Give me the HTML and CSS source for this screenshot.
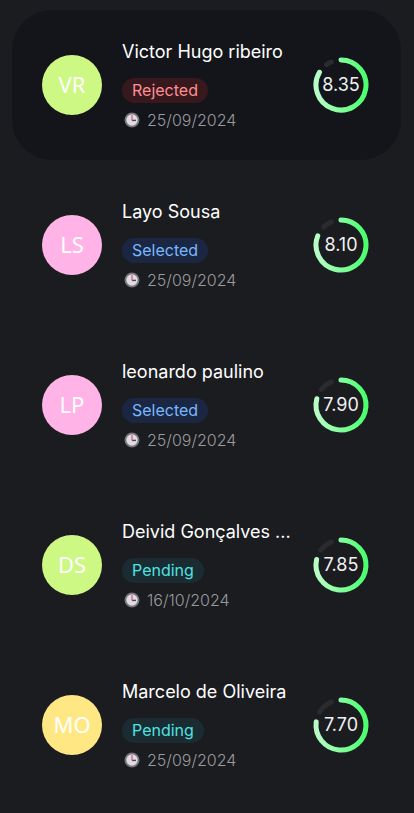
FILE: index.html
```
<!DOCTYPE html>
<html lang="en">
<head>
<meta charset="utf-8">
<meta name="viewport" content="width=device-width, initial-scale=1">
<title>Candidates</title>
<link rel="stylesheet" href="styles.css">
</head>
<body>
<svg class="defs" aria-hidden="true">
  <defs>
    <linearGradient id="ring" x1="0" y1="0" x2="1" y2="0">
      <stop offset="0" stop-color="#b9fcc8"/>
      <stop offset="1" stop-color="#4bff6e"/>
    </linearGradient>
    <symbol id="clock" viewBox="0 0 16 16">
      <circle cx="8" cy="8" r="6.6" fill="#dedbe2" stroke="#77747c" stroke-width="1.8"/>
      <path d="M8 8.4h4" stroke="#4c4656" stroke-width="1.4"/>
      <path d="M8 3v5.4" stroke="#dc5473" stroke-width="1.2"/>
    </symbol>
  </defs>
</svg>
<ul class="list" id="list"></ul>
<script src="app.js"></script>
</body>
</html>
```
FILE: styles.css
```
* { box-sizing: border-box; }

body {
  margin: 0;
  background: #1b1c20;
  color: #fff;
  font-family: Inter, "Noto Sans", sans-serif;
}

.defs { position: absolute; width: 0; height: 0; }

.list {
  display: flex;
  flex-direction: column;
  gap: 10px;
  margin: 0;
  padding: 10px 13px 0 12px;
  list-style: none;
  height: 100vh;
  overflow: hidden;
}

.card {
  display: flex;
  flex: none;
  align-items: center;
  gap: 20px;
  min-height: 150px;
  padding: 26px 30px;
  border-radius: 40px;
}

.card.active { background: #14151a; }

.avatar {
  display: grid;
  place-items: center;
  flex: none;
  width: 60px;
  height: 60px;
  padding-bottom: 2px;
  border-radius: 50%;
  font-family: "Noto Sans", sans-serif;
  font-size: 22px;
}

.lime { background: #cdf884; }
.pink { background: #ffb3e6; }
.yellow { background: #ffe883; }

.info {
  flex: 1;
  min-width: 0;
  padding-top: 2px;
}

.name {
  margin: 0 0 14px;
  font-size: 18px;
  font-weight: 400;
  line-height: 24px;
  white-space: nowrap;
}

.badge {
  display: block;
  width: fit-content;
  padding: 0 10px;
  border-radius: 13px;
  font-size: 16px;
  line-height: 25px;
}

.rejected { background: #37191d; color: #ff8f92; }
.selected { background: #1b2742; color: #78b8ff; }
.pending { background: #1a2b32; color: #4fe3e3; }

.date {
  display: flex;
  align-items: center;
  gap: 7px;
  margin-top: 4px;
  padding-left: 2px;
  color: #999a9d;
  font-size: 16px;
  font-weight: 300;
  line-height: 26px;
}

.clock { width: 16px; height: 16px; }

.score {
  display: grid;
  flex: none;
  width: 60px;
  height: 60px;
  place-items: center;
}

.score > * { grid-area: 1 / 1; }

.ring {
  width: 60px;
  height: 60px;
  fill: none;
  stroke-width: 5;
  stroke-linecap: round;
}

.track { stroke: #292b31; }
.bar { stroke: url(#ring); }

.value {
  color: #f1f1f1;
  font-size: 18px;
  line-height: 24px;
}
```
FILE: app.js
```
const candidates = [
  { initials: "VR", tone: "lime", name: "Victor Hugo ribeiro", status: "Rejected", date: "25/09/2024", score: 8.35, active: true },
  { initials: "LS", tone: "pink", name: "Layo Sousa", status: "Selected", date: "25/09/2024", score: 8.1 },
  { initials: "LP", tone: "pink", name: "leonardo paulino", status: "Selected", date: "25/09/2024", score: 7.9 },
  { initials: "DS", tone: "lime", name: "Deivid Gonçalves ...", status: "Pending", date: "16/10/2024", score: 7.85 },
  { initials: "MO", tone: "yellow", name: "Marcelo de Oliveira", status: "Pending", date: "25/09/2024", score: 7.7 }
];

// Arc on a circle of radius 25; angles are degrees clockwise from the top.
function arc(from, to) {
  const point = (deg) => {
    const a = deg * Math.PI / 180;
    return (30 + 25 * Math.sin(a)).toFixed(2) + " " + (30 - 25 * Math.cos(a)).toFixed(2);
  };
  return `M${point(from)}A25 25 0 ${to - from > 180 ? 1 : 0} 1 ${point(to)}`;
}

document.getElementById("list").innerHTML = candidates.map((c) => {
  const end = c.score * 36;
  return `<li class="card${c.active ? " active" : ""}">
    <span class="avatar ${c.tone}">${c.initials}</span>
    <div class="info">
      <h2 class="name">${c.name}</h2>
      <span class="badge ${c.status.toLowerCase()}">${c.status}</span>
      <div class="date"><svg class="clock" aria-hidden="true"><use href="#clock"/></svg><time>${c.date}</time></div>
    </div>
    <div class="score">
      <svg class="ring" viewBox="0 0 60 60" aria-hidden="true">
        <path class="track" d="${arc(end + 24, 337)}"/>
        <path class="bar" d="${arc(0, end)}"/>
      </svg>
      <span class="value">${c.score.toFixed(2)}</span>
    </div>
  </li>`;
}).join("");
```
